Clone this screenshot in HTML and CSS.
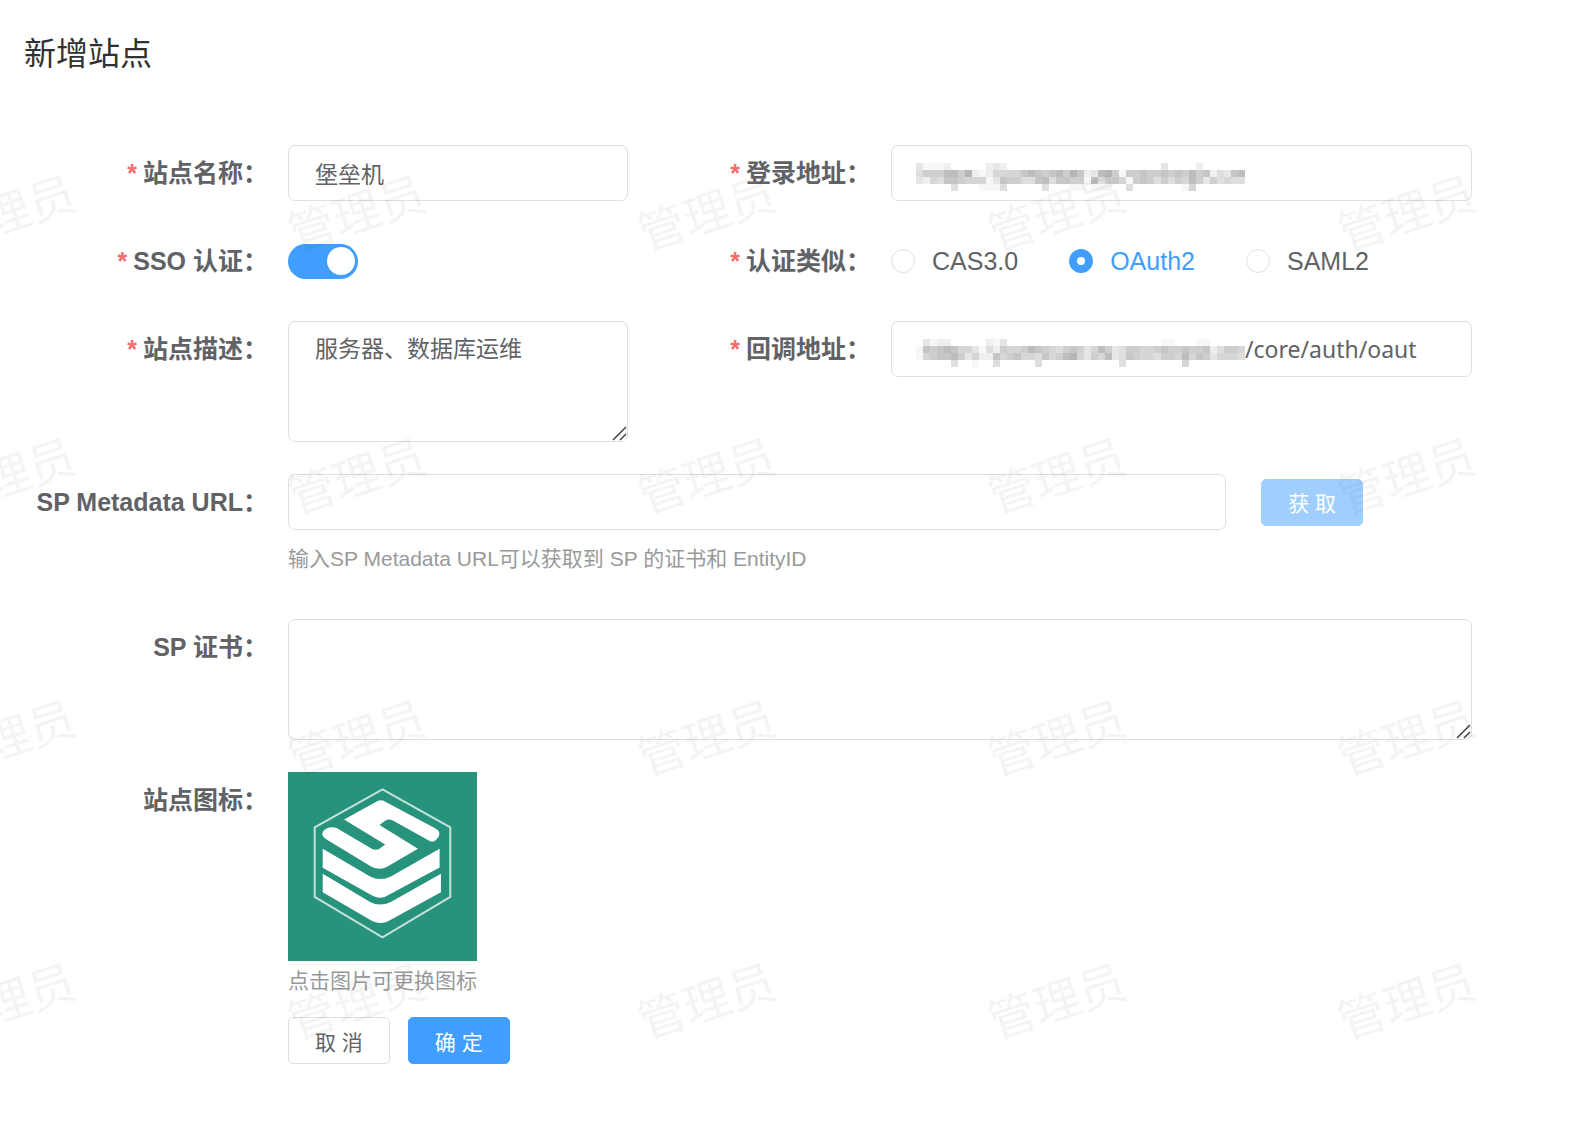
FILE: index.html
```html
<!DOCTYPE html>
<html lang="zh-CN">
<head>
<meta charset="utf-8">
<meta name="viewport" content="width=device-width, initial-scale=1">
<title>新增站点</title>
<link rel="stylesheet" href="styles.css">
<script src="mosaic.js" defer></script>
</head>
<body>
<header class="page-header">
  <h1 class="page-title">新增站点</h1>
</header>

<form class="site-form">
  <div class="form-row">
    <div class="form-item">
      <label class="form-label required" for="site-name">站点名称：</label>
      <div class="form-control"><input class="input" id="site-name" type="text" value="堡垒机"></div>
    </div>
    <div class="form-item">
      <label class="form-label required" for="login-url">登录地址：</label>
      <div class="form-control">
        <div class="masked-input">
          <svg class="mosaic" aria-hidden="true" data-rows="31112000002320000000000000000000000300002000000 46668869212555578767869723896166766767686724378 32547765551376644784776618467516764646586364544 00000400011140000040001101110040000000150000000"></svg>
          <input class="masked-field" id="login-url" type="text">
        </div>
      </div>
    </div>
  </div>

  <div class="form-row">
    <div class="form-item">
      <label class="form-label required" for="sso">SSO 认证：</label>
      <div class="form-control center"><input class="switch" id="sso" type="checkbox" role="switch" checked></div>
    </div>
    <div class="form-item" role="radiogroup" aria-labelledby="auth-label">
      <span class="form-label required" id="auth-label">认证类似：</span>
      <div class="form-control center radio-group">
        <label class="radio"><input class="radio-input" type="radio" name="auth"><span class="radio-text">CAS3.0</span></label>
        <label class="radio"><input class="radio-input" type="radio" name="auth" checked><span class="radio-text">OAuth2</span></label>
        <label class="radio"><input class="radio-input" type="radio" name="auth"><span class="radio-text">SAML2</span></label>
      </div>
    </div>
  </div>

  <div class="form-row">
    <div class="form-item">
      <label class="form-label required" for="site-desc">站点描述：</label>
      <div class="form-control"><textarea class="input textarea" id="site-desc">服务器、数据库运维</textarea></div>
    </div>
    <div class="form-item">
      <label class="form-label required" for="callback-url">回调地址：</label>
      <div class="form-control">
        <div class="masked-input">
          <svg class="mosaic" aria-hidden="true" data-rows="03122000002130000000000000000000000110001100000 17678755314265568765467635863466556766766724665 15677863522756755475689536583476554665857635554 00000400100400000400000000000400000000500000000"></svg>
          <input class="masked-field" id="callback-url" type="text" value="/core/auth/oaut">
        </div>
      </div>
    </div>
  </div>

  <div class="form-item">
    <label class="form-label" for="sp-url">SP Metadata URL：</label>
    <div class="form-control">
      <div class="fetch-row">
        <input class="input" id="sp-url" type="text">
        <button class="button primary" type="button" disabled>获 取</button>
      </div>
      <p class="hint">输入SP Metadata URL可以获取到 SP 的证书和 EntityID</p>
    </div>
  </div>

  <div class="form-item">
    <label class="form-label" for="sp-cert">SP 证书：</label>
    <div class="form-control"><textarea class="input textarea" id="sp-cert"></textarea></div>
  </div>

  <div class="form-item">
    <span class="form-label">站点图标：</span>
    <div class="form-control">
      <button class="icon-picker" type="button" aria-label="更换图标">
        <svg class="site-icon" viewBox="54 36 566 566" aria-hidden="true">
          <path fill="#28937c" d="M54 36h566v566H54z"/>
          <path fill="none" stroke="#c3e2da" stroke-width="6" d="M337 88 540 202V410L337 531 134 410V202Z"/>
          <g fill="#fff">
            <path d="M320 124Q332 117 344 124L496 205Q513 215 505 230L497 240Q488 248 477 242L368 181Q355 175 345 182L328 195 443 266 352 319Q330 332 304 320L166 236Q151 225 160 213Q173 197 198 203L305 266Q318 273 330 264L345 253 222 178Z"/>
            <path d="M158 266 300 349Q330 364 362 349L508 266V322L352 406Q332 419 306 406L158 323Z"/>
            <path d="M158 341 300 425Q330 441 362 425L512 341V396L355 482Q332 494 306 482L158 396Z"/>
          </g>
        </svg>
      </button>
      <p class="caption">点击图片可更换图标</p>
      <div class="actions">
        <button class="button" type="button">取 消</button>
        <button class="button primary" type="submit">确 定</button>
      </div>
    </div>
  </div>
</form>

<svg class="watermark" aria-hidden="true">
  <defs>
    <pattern id="watermark-tile" x="181" y="82" width="350" height="525" patternUnits="userSpaceOnUse">
      <text class="watermark-text" transform="translate(176 132) rotate(-18)">管理员</text>
      <text class="watermark-text" transform="translate(176 395) rotate(-18)">管理员</text>
    </pattern>
  </defs>
  <rect width="100%" height="100%" fill="url(#watermark-tile)"/>
</svg>
</body>
</html>
```

FILE: styles.css
```css
* {
  box-sizing: border-box;
}

body {
  margin: 0;
  background: #fff;
  color: #606266;
  font-family: "Liberation Sans", "Noto Sans CJK SC", sans-serif;
  font-size: 25px;
}

input,
textarea,
button {
  margin: 0;
  color: inherit;
  font-family: inherit;
}

.page-header {
  padding: 30px 24px;
}

.page-title {
  margin: 0;
  color: #303133;
  font-size: 32px;
  font-weight: 400;
  line-height: 48px;
}

.site-form {
  display: flex;
  flex-direction: column;
  gap: 32px;
  padding: 37px 106px 80px 0;
}

.form-row {
  display: grid;
  grid-template-columns: minmax(0, 628fr) minmax(0, 844fr);
}

.form-item {
  display: flex;
  align-items: flex-start;
}

.form-label {
  flex: none;
  width: 288px;
  padding-right: 20px;
  font-weight: 700;
  line-height: 56px;
  text-align: right;
  white-space: nowrap;
}

.form-row > .form-item:last-child > .form-label {
  width: 263px;
}

.required::before {
  content: "*";
  margin-right: 6px;
  color: #f56c6c;
}

.form-control {
  flex: 1;
  min-width: 0;
}

.center {
  display: flex;
  align-items: center;
  min-height: 56px;
}

.input,
.masked-input {
  display: block;
  width: 100%;
  height: 56px;
  border: 1px solid #dcdfe6;
  border-radius: 7px;
  background: #fff;
}

.input {
  padding: 0 26px;
  font-size: 23px;
}

.textarea {
  height: 121px;
  padding: 10px 26px;
  line-height: 35px;
  resize: vertical;
}

.textarea::-webkit-scrollbar {
  width: 18px;
}

.textarea::-webkit-resizer {
  background: url("data:image/svg+xml,%3Csvg xmlns='http://www.w3.org/2000/svg' width='18' height='18'%3E%3Cpath d='M1 14 14 1M8 14l6-6' stroke='%23444' stroke-width='1.5'/%3E%3C/svg%3E") no-repeat;
}

.masked-input {
  display: flex;
  align-items: center;
  padding: 0 24px;
}

.mosaic {
  flex: none;
  height: 28px;
  margin-top: 8px;
}

.masked-field {
  flex: 1;
  min-width: 0;
  height: 100%;
  padding: 0;
  border: 0;
  background: none;
  font-family: "Noto Sans", "Noto Sans CJK SC", sans-serif;
  font-size: 23px;
}

.switch {
  appearance: none;
  width: 70px;
  height: 35px;
  padding: 3px;
  border-radius: 18px;
  background: #dcdfe6;
}

.switch::before {
  content: "";
  display: block;
  width: 28px;
  height: 28px;
  border-radius: 50%;
  background: #fff;
}

.switch:checked {
  background: #409eff;
}

.switch:checked::before {
  margin-left: auto;
}

.radio-group {
  gap: 51px;
}

.radio {
  display: flex;
  align-items: center;
  gap: 17px;
}

.radio-input {
  appearance: none;
  width: 24px;
  height: 24px;
  border: 1px solid #dcdfe6;
  border-radius: 50%;
  background: #fff;
}

.radio-input:checked {
  border: 8px solid #409eff;
}

.radio-input:checked + .radio-text {
  color: #409eff;
}

.fetch-row {
  display: flex;
  align-items: center;
  gap: 35px;
  padding-right: 109px;
}

.fetch-row .input {
  flex: 1;
  min-width: 0;
}

.button {
  flex: none;
  height: 47px;
  padding: 0 26px;
  border: 1px solid #dcdfe6;
  border-radius: 5px;
  background: #fff;
  font-size: 21px;
}

.primary {
  border-color: #409eff;
  background: #409eff;
  color: #fff;
}

.primary:disabled {
  border-color: #a0cfff;
  background: #a0cfff;
}

.hint,
.caption {
  margin: 0;
  color: #999;
  font-size: 21px;
}

.hint {
  margin-top: 8px;
  padding-bottom: 7px;
  line-height: 42px;
}

.icon-picker {
  display: block;
  width: 189px;
  height: 189px;
  padding: 0;
  border: 0;
  background: none;
  cursor: pointer;
}

.site-icon {
  display: block;
  width: 100%;
  height: 100%;
}

.caption {
  line-height: 40px;
}

.actions {
  display: flex;
  gap: 18px;
  margin-top: 16px;
}

.watermark {
  position: fixed;
  inset: 0;
  width: 100%;
  height: 100%;
  pointer-events: none;
}

.watermark-text {
  fill: #000;
  fill-opacity: 0.045;
  font-size: 47px;
  font-weight: 400;
  text-anchor: middle;
  dominant-baseline: central;
}
```

FILE: mosaic.js
```js
// Draws the masked part of an address: each digit is the shade of one 7px cell.
const CELL = 7;

for (const svg of document.querySelectorAll(".mosaic")) {
  const rows = svg.dataset.rows.split(" ");
  svg.setAttribute("width", rows[0].length * CELL);
  rows.forEach((row, y) => {
    [...row].forEach((shade, x) => {
      const cell = document.createElementNS("http://www.w3.org/2000/svg", "rect");
      cell.setAttribute("x", x * CELL);
      cell.setAttribute("y", y * CELL);
      cell.setAttribute("width", CELL);
      cell.setAttribute("height", CELL);
      cell.setAttribute("fill", "#303133");
      cell.setAttribute("fill-opacity", shade * 0.04);
      svg.append(cell);
    });
  });
}
```
